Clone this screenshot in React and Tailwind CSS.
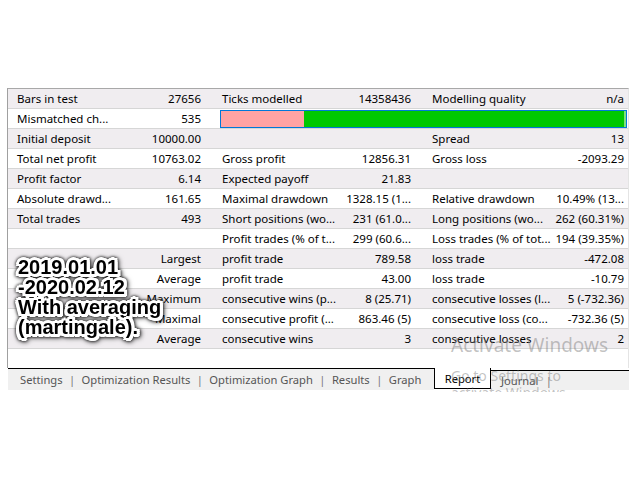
import React from "react";

const rows = [
  ["Bars in test", "27656", "Ticks modelled", "14358436", "Modelling quality", "n/a"],
  "BAR",
  ["Initial deposit", "10000.00", "", "", "Spread", "13"],
  ["Total net profit", "10763.02", "Gross profit", "12856.31", "Gross loss", "-2093.29"],
  ["Profit factor", "6.14", "Expected payoff", "21.83", "", ""],
  ["Absolute drawd...", "161.65", "Maximal drawdown", "1328.15 (1...", "Relative drawdown", "10.49% (13..."],
  ["Total trades", "493", "Short positions (wo...", "231 (61.0...", "Long positions (wo...", "262 (60.31%)"],
  ["", "", "Profit trades (% of t...", "299 (60.6...", "Loss trades (% of tot...", "194 (39.35%)"],
  ["", "Largest", "profit trade", "789.58", "loss trade", "-472.08"],
  ["", "Average", "profit trade", "43.00", "loss trade", "-10.79"],
  ["", "Maximum", "consecutive wins (p...", "8 (25.71)", "consecutive losses (l...", "5 (-732.36)"],
  ["", "Maximal", "consecutive profit (...", "863.46 (5)", "consecutive loss (co...", "-732.36 (5)"],
  ["", "Average", "consecutive wins", "3", "consecutive losses", "2"],
];

const font = { fontFamily: '"Noto Sans", sans-serif' };

function Row({ data, idx }) {
  const bg = idx % 2 === 0 ? "bg-[#f0edf0]" : "bg-white";
  if (data === "BAR") {
    return (
      <div className={`grid grid-cols-[105px_99px_416px] h-[20px] border-b border-[#d6d6d6] ${bg}`}>
        <div className="pl-[9px] leading-[19px] whitespace-nowrap overflow-hidden">Mismatched ch...</div>
        <div className="pr-[11px] text-right leading-[19px]">535</div>
        <div className="pl-[8px] pt-[1px]">
          <div className="flex h-[18px] w-[407px] border border-[#0078d7]">
            <div className="w-[83px] bg-[#ffa3a3]" />
            <div className="flex-1 bg-[#00c800]" />
            <div className="w-[2px] bg-[#7ee07e]" />
          </div>
        </div>
      </div>
    );
  }
  return (
    <div className={`grid grid-cols-[105px_99px_130px_80px_130px_76px] h-[20px] border-b border-[#d6d6d6] leading-[19px] ${bg}`}>
      <div className="pl-[9px] whitespace-nowrap overflow-hidden">{data[0]}</div>
      <div className="pr-[11px] text-right whitespace-nowrap">{data[1]}</div>
      <div className="pl-[10px] whitespace-nowrap overflow-hidden">{data[2]}</div>
      <div className="pr-[11px] text-right whitespace-nowrap">{data[3]}</div>
      <div className="pl-[10px] whitespace-nowrap overflow-hidden">{data[4]}</div>
      <div className="pr-[4px] text-right whitespace-nowrap">{data[5]}</div>
    </div>
  );
}

function Sep() {
  return <span className="w-[1px] flex justify-center text-[#777]">|</span>;
}

export default function App() {
  return (
    <div className="w-[640px] h-[480px] bg-white relative overflow-hidden" style={font}>
      <div className="relative h-[392px] overflow-hidden">
        <div className="h-[88px]" />
        <div className="ml-[7px] w-[622px] border-l border-t border-r border-l-[#a0a0a0] border-t-[#a8a8a8] border-r-[#e4e4e4] text-[11.5px] text-black">
          {rows.map((r, i) => (
            <Row key={i} data={r} idx={i} />
          ))}
          <div className="h-[19px] bg-white" />
        </div>
        <div className="ml-[8px] w-[621px] flex h-[22px] text-[11.2px]">
          <div className="w-[426px] flex items-start border-t border-black bg-[#f0f0f0] text-[#555] leading-[19px] pt-[1px] pl-[12px] gap-[9px] whitespace-nowrap">
            <span>Settings</span>
            <Sep />
            <span>Optimization Results</span>
            <Sep />
            <span>Optimization Graph</span>
            <Sep />
            <span>Results</span>
            <Sep />
            <span>Graph</span>
          </div>
          <div className="w-[57px] h-[21px] border-l border-r border-b border-black bg-white text-black leading-[19px] pt-[1px] text-center">
            Report
          </div>
          <div className="flex-1 mt-[2px] border-t border-black bg-[#f0f0f0] text-[#555] leading-[19px] pl-[10px] flex gap-[10px] whitespace-nowrap">
            <span>Journal</span>
            <Sep />
          </div>
        </div>

        <div
          className="absolute left-[18px] top-[257px] text-[20px] leading-[20px] font-bold text-black [text-shadow:2px_0_0_#fff,-2px_0_0_#fff,0_2px_0_#fff,0_-2px_0_#fff,2px_2px_0_#fff,-2px_-2px_0_#fff,2px_-2px_0_#fff,-2px_2px_0_#fff,3px_0_0_#fff,-3px_0_0_#fff,0_3px_0_#fff,0_-3px_0_#fff,3px_2px_0_#fff,2px_3px_0_#fff,-3px_2px_0_#fff,3px_-2px_0_#fff] [filter:drop-shadow(0_0_1.5px_rgba(0,0,0,0.9))_drop-shadow(1px_1px_2px_rgba(0,0,0,0.6))]"
          style={{ fontFamily: '"Liberation Sans", Arial, sans-serif' }}
        >
          <div>2019.01.01</div>
          <div>-2020.02.12</div>
          <div>With averaging</div>
          <div>(martingale).</div>
        </div>

        <div className="absolute left-[451px] top-[333px] text-[19px] leading-[24px] text-[rgba(120,120,120,0.45)] whitespace-nowrap">
          Activate Windows
        </div>
        <div className="absolute left-[451px] top-[367px] text-[14px] leading-[17px] text-[rgba(120,120,120,0.45)] whitespace-nowrap">
          <div>Go to Settings to</div>
          <div>activate Windows.</div>
        </div>
      </div>
    </div>
  );
}
